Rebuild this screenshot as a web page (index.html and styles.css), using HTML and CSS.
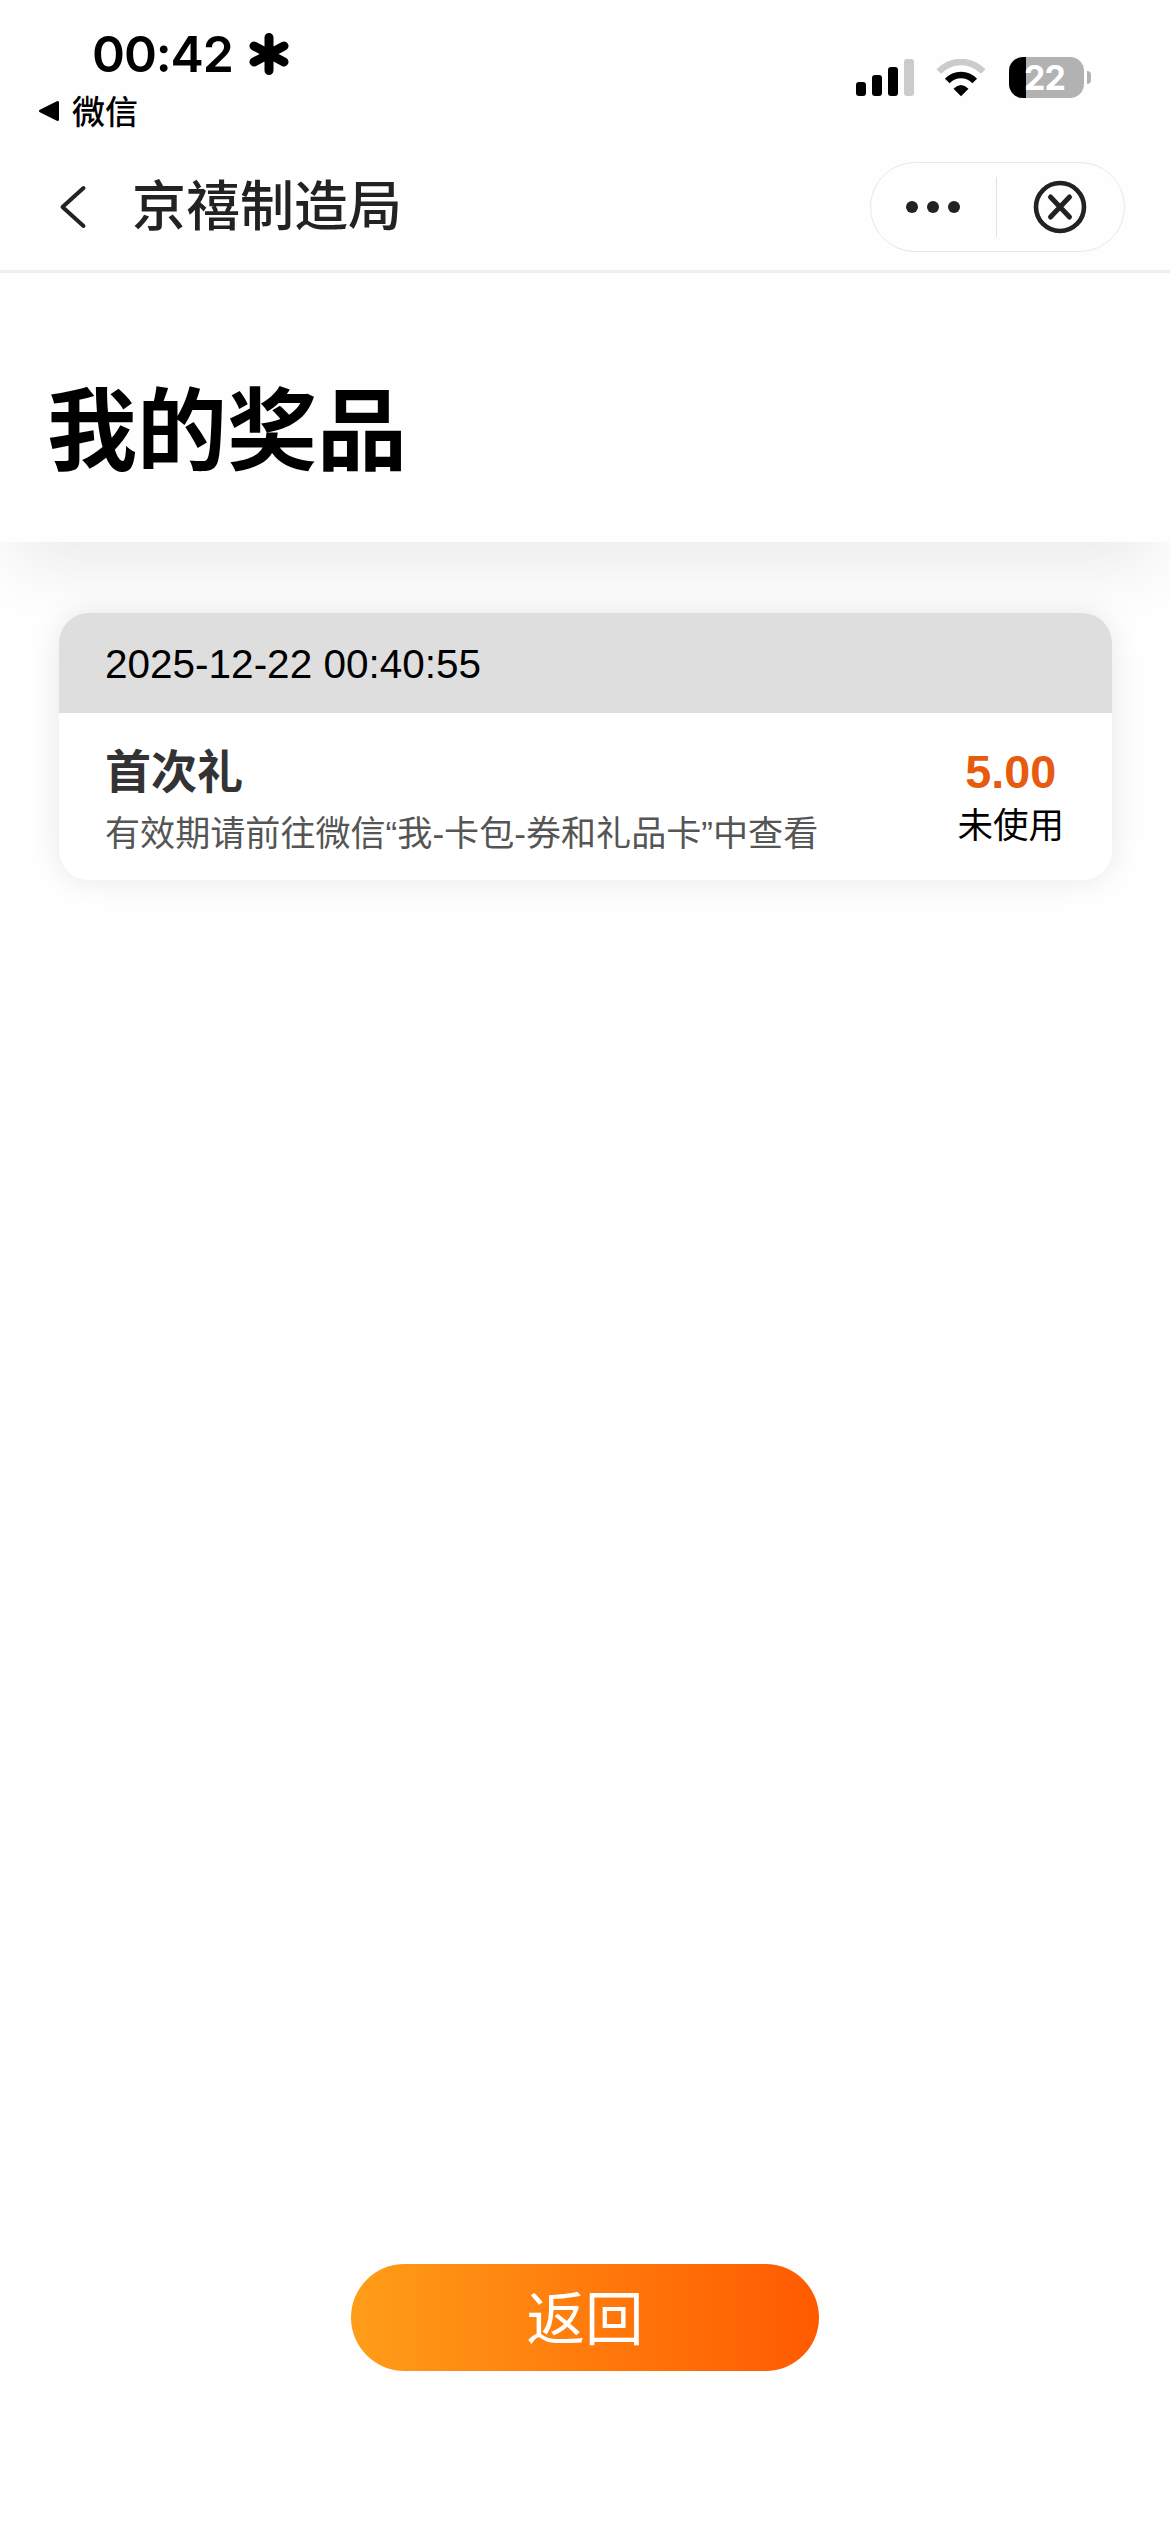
FILE: index.html
```html
<!DOCTYPE html>
<html lang="zh-CN">
<head>
<meta charset="utf-8">
<title>我的奖品</title>
<link rel="stylesheet" href="styles.css">
</head>
<body>
<div class="status">
  <div class="status-left">
    <div class="clock">
      <span class="time">00:42</span>
      <svg class="asterisk" width="40" height="44" viewBox="-20 -22 40 44"><path d="M0-16.500V16.500M-15-8L15 8M-15 8L15-8" stroke="#000" stroke-width="9" stroke-linecap="round"/></svg>
    </div>
    <div class="back-app">
      <svg width="22" height="22" viewBox="0 0 22 22"><path d="M2.500 11L19.500 2.500V19.500Z" fill="#000" stroke="#000" stroke-width="3" stroke-linejoin="round"/></svg>
      <span>微信</span>
    </div>
  </div>
  <div class="status-right">
    <svg class="signal" width="58" height="38" viewBox="0 0 58 38"><g fill="#000"><rect y="23" width="10" height="14" rx="3"/><rect x="16" y="16" width="10" height="21" rx="3"/><rect x="32" y="8" width="10" height="29" rx="3"/></g><rect x="48" width="10" height="37" rx="3" fill="#cbcbcb"/></svg>
    <svg class="wifi" width="50" height="38" viewBox="0 0 50 38"><path d="M2.800 12.600Q12 3 25 3T47.200 12.600" fill="none" stroke="#cbcbcb" stroke-width="6.500"/><path d="M11.300 22Q17 16 25 16T38.700 22" fill="none" stroke="#000" stroke-width="6.500"/><path d="M17.500 29.800Q25 22.400 32.500 29.800L25 37.300Z"/></svg>
    <div class="battery"><span class="level">22</span><i class="cap"></i></div>
  </div>
</div>
<header class="nav">
  <svg class="back" width="28" height="44" viewBox="0 0 28 44"><path d="M24.500 3L3.500 22L24.500 41" fill="none" stroke="#222" stroke-width="4" stroke-linecap="round" stroke-linejoin="round"/></svg>
  <span class="nav-title">京禧制造局</span>
  <div class="capsule">
    <svg class="dots" width="54" height="12" viewBox="0 0 54 12" fill="#222"><circle cx="6" cy="6" r="6"/><circle cx="27" cy="6" r="6"/><circle cx="48" cy="6" r="6"/></svg>
    <i class="divider"></i>
    <svg class="close" width="54" height="54" viewBox="-27 -27 54 54"><g fill="none" stroke="#222"><circle r="24" stroke-width="4.600"/><path d="M-9.500-10L9.500 10M9.500-10L-9.500 10" stroke-width="5" stroke-linecap="round"/></g></svg>
  </div>
</header>
<main class="page">
  <h1 class="heading">我的奖品</h1>
  <section class="card">
    <div class="card-date">2025-12-22 00:40:55</div>
    <div class="card-body">
      <div class="info">
        <div class="name">首次礼</div>
        <div class="desc">有效期请前往微信“我-卡包-券和礼品卡”中查看</div>
      </div>
      <div class="value">
        <div class="amount">5.00</div>
        <div class="state">未使用</div>
      </div>
    </div>
  </section>
  <button class="return">返回</button>
</main>
</body>
</html>
```
FILE: styles.css
```css
* { box-sizing: border-box; }
body {
  margin: 0;
  width: 1170px;
  height: 2532px;
  display: flex;
  flex-direction: column;
  overflow: hidden;
  background: #fefefe;
  color: #000;
  font-family: "Liberation Sans", "Noto Sans CJK SC", sans-serif;
}
svg { display: block; flex: none; }
.status {
  height: 145px;
  display: flex;
  justify-content: space-between;
  padding: 0 79px 0 38px;
}
.status-left { padding-top: 26px; }
.clock {
  display: flex;
  align-items: center;
  height: 56px;
  padding-left: 54px;
}
.time {
  width: 156.500px;
  font: 600 50px/56px Inter, sans-serif;
  letter-spacing: -1.100px;
  white-space: nowrap;
}
.back-app {
  display: flex;
  align-items: center;
  gap: 12px;
  height: 58px;
  font: 500 33px/58px "Noto Sans CJK SC", sans-serif;
}
.back-app span { padding-bottom: 2px; }
.status-right {
  display: flex;
  align-items: flex-start;
  padding-top: 57px;
}
.signal { margin: 2px 22px 0 0; }
.wifi { margin: 2px 23px 0 0; }
.battery {
  display: flex;
  align-items: center;
  gap: 3px;
}
.level {
  width: 75px;
  height: 41px;
  padding-left: 15px;
  border-radius: 14px;
  background: linear-gradient(90deg, #000 17px, #b2b2b2 17px);
  color: #fff;
  font: 700 34px/41px Inter, sans-serif;
  letter-spacing: -1px;
}
.cap {
  width: 4px;
  height: 13px;
  border-radius: 0 6px 6px 0;
  background: #b2b2b2;
}
.nav {
  height: 128px;
  display: flex;
  align-items: center;
  padding: 0 45px 2px 59px;
  border-bottom: 3px solid #eee;
}
.nav-title {
  margin-left: 45px;
  padding-bottom: 7px;
  font: 500 54px/80px "Noto Sans CJK SC", sans-serif;
  color: #222;
}
.capsule {
  margin-left: auto;
  width: 255px;
  height: 90px;
  display: flex;
  align-items: center;
  padding: 0 37px 0 35px;
  border: 1px solid #e8e8e8;
  border-radius: 45px;
}
.divider { width: 1px; height: 60px; margin: 0 36px; background: #e2e2e2; }
.page {
  flex: 1;
  display: flex;
  flex-direction: column;
}
.heading {
  margin: 0;
  height: 269px;
  padding: 86px 0 0 47px;
  background: #fefefe;
  box-shadow: 0 40px 60px -15px rgba(0, 0, 0, 0.075);
  font: 700 90px/130px "Noto Sans CJK SC", sans-serif;
}
.card {
  margin: 71px 58px 0 59px;
  height: 267px;
  border-radius: 30px;
  overflow: hidden;
  background: #fff;
  box-shadow: 0 0 30px rgba(0, 0, 0, 0.09);
}
.card-date {
  height: 100px;
  padding-left: 46px;
  background: #dedede;
  font-size: 40.500px;
  line-height: 103px;
}
.card-body {
  display: flex;
  justify-content: space-between;
  padding: 25px 48px 0 46px;
}
.name {
  font: 700 46px/60px "Noto Sans CJK SC", sans-serif;
  color: #333;
}
.desc {
  margin-top: 6px;
  font-size: 35.100px;
  line-height: 60px;
  color: #555;
}
.value { padding-top: 4px; text-align: center; }
.amount {
  font-size: 46.800px;
  font-weight: 700;
  line-height: 60px;
  color: #e65b10;
}
.state {
  font-size: 35.500px;
  line-height: 49px;
}
.return {
  margin: auto auto 161px;
  width: 468px;
  height: 107px;
  padding: 0 0 6px;
  border: 0;
  border-radius: 54px;
  background: linear-gradient(90deg, #ff9d18, #ff5a00);
  color: #fff;
  font: 400 58.500px/101px "Noto Sans CJK SC", sans-serif;
}
```
